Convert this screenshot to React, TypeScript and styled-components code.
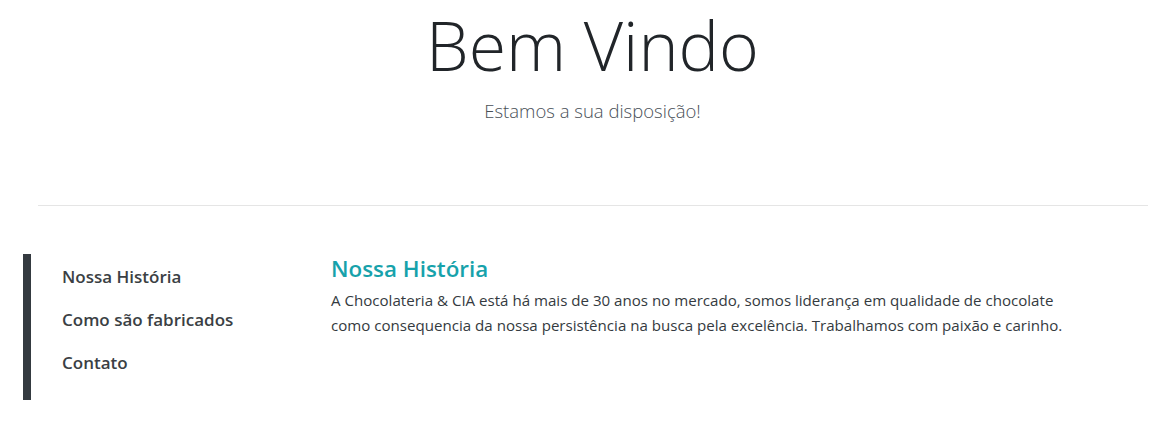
import React from 'react';
import styled, { createGlobalStyle } from 'styled-components';

const GlobalStyle = createGlobalStyle`
  body {
    margin: 0;
    background: #fff;
    font-family: "Open Sans", "Noto Sans", sans-serif;
    color: #212529;
  }
`

const Page = styled.div`
  width: 1168px;
`

const Header = styled.header`
  display: flex;
  flex-direction: column;
  align-items: center;
  padding: 4px 0 0 17px;
`

const Title = styled.h1`
  margin: 0;
  font-size: 68px;
  font-weight: 300;
  line-height: 1.2;
  color: #212529;
`

const Lead = styled.p`
  margin: 12px 0 0;
  font-size: 18.5px;
  font-weight: 300;
  color: #495057;
`

const Divider = styled.hr`
  margin: 82px 20px 0 38px;
  border: 0;
  border-top: 1px solid #e5e5e5;
`

const Section = styled.section`
  display: flex;
  margin-top: 48px;
`

const SideNav = styled.nav`
  display: flex;
  flex-direction: column;
  margin-left: 23px;
  width: 308px;
  padding: 1px 0 16px 31px;
  border-left: 8px solid #343a40;
  box-sizing: border-box;
  flex-shrink: 0;
`

const NavLink = styled.a`
  display: block;
  padding: 10px 0;
  line-height: 23px;
  font-size: 17px;
  font-weight: 550;
  color: #3b3f44;
  text-decoration: none;
`

const Content = styled.article`
  width: 760px;
  padding-top: 2px;
`

const Heading = styled.h4`
  margin: 0 0 6px;
  font-size: 22.4px;
  font-weight: 600;
  line-height: 1.2;
  color: #17a2ab;
`

const Text = styled.p`
  margin: 0;
  font-size: 15.1px;
  line-height: 25px;
  color: #343a40;
`

const App: React.FC = () => {
  return (
    <Page>
      <GlobalStyle />
      <Header>
        <Title>Bem Vindo</Title>
        <Lead>Estamos a sua disposição!</Lead>
      </Header>
      <Divider />
      <Section>
        <SideNav>
          <NavLink href="#historia">Nossa História</NavLink>
          <NavLink href="#fabricacao">Como são fabricados</NavLink>
          <NavLink href="#contato">Contato</NavLink>
        </SideNav>
        <Content>
          <Heading>Nossa História</Heading>
          <Text>
            A Chocolateria &amp; CIA está há mais de 30 anos no mercado, somos liderança em qualidade de chocolate
            como consequencia da nossa persistência na busca pela excelência. Trabalhamos com paixão e carinho.
          </Text>
        </Content>
      </Section>
    </Page>
  )
}

export default App
